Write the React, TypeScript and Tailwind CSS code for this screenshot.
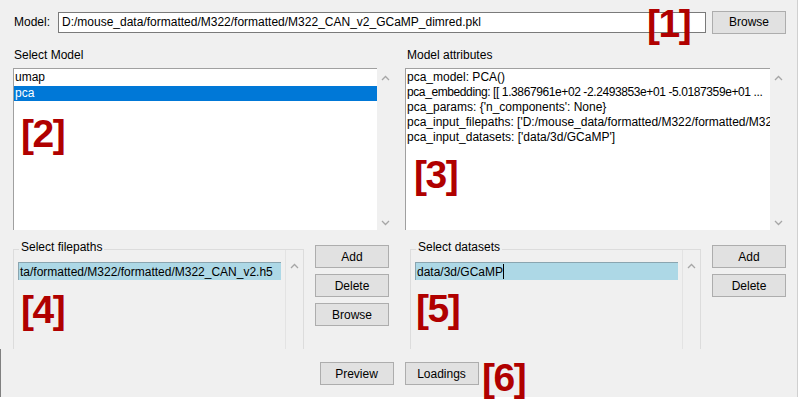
import type { ReactNode } from "react";

const FONT = "font-['Liberation_Sans',Arial,sans-serif] text-[12px] text-black";

function UpArrow() {
  return (
    <svg width="9" height="6" viewBox="0 0 9 6" className="block">
      <polyline points="1,5 4.5,1.5 8,5" fill="none" stroke="#a6a6a6" strokeWidth="1.3" />
    </svg>
  );
}

function DownArrow() {
  return (
    <svg width="9" height="6" viewBox="0 0 9 6" className="block">
      <polyline points="1,1 4.5,4.5 8,1" fill="none" stroke="#a6a6a6" strokeWidth="1.3" />
    </svg>
  );
}

function Btn({ children, className = "" }: { children: ReactNode; className?: string }) {
  return (
    <div
      className={
        "flex items-center justify-center w-[74px] h-[23px] bg-[#e1e1e1] border border-[#adadad] " +
        className
      }
    >
      {children}
    </div>
  );
}

// red callout numbers laid over the dialog
function Tag({ n, className }: { n: number; className: string }) {
  return (
    <div
      className={
        "absolute font-['Liberation_Sans',Arial,sans-serif] font-bold text-[39px] tracking-[-1.5px] leading-none text-[#b00000] " +
        className
      }
    >
      [{n}]
    </div>
  );
}

function Scrollbar() {
  return (
    <div className="w-[17px] flex flex-col items-center justify-between pt-[7px] pb-[4px]">
      <UpArrow />
      <DownArrow />
    </div>
  );
}

function GroupList({
  title,
  item,
  caret,
}: {
  title: string;
  item: string;
  caret?: boolean;
}) {
  return (
    <div className="relative w-[291px] h-[100px] mt-[4px] border-t border-x border-[#dcdcdc] flex">
      <span className="absolute -top-[10px] left-[5px] px-[2px] bg-[#f0f0f0] leading-[15px]">
        {title}
      </span>
      <div className="flex-1 pt-[12px] pl-[4px] pr-[4px] overflow-hidden">
        <div className="h-[18px] bg-[#add8e6] border-t border-l border-[#8aa5b0] pl-[1px] leading-[16px] whitespace-nowrap overflow-hidden flex items-center">
          {item}
          {caret && <span className="inline-block w-[1px] h-[15px] bg-black" />}
        </div>
      </div>
      <div className="w-[18px] border-l border-[#e3e3e3] flex flex-col items-center pt-[13px]">
        <UpArrow />
      </div>
    </div>
  );
}

export default function App() {
  const attrs = [
    { t: "pca_model: PCA()", c: "" },
    { t: "pca_embedding: [[ 1.3867961e+02 -2.2493853e+01 -5.0187359e+01 ...", c: "tracking-[-0.4px]" },
    { t: "pca_params: {'n_components': None}", c: "" },
    { t: "pca_input_filepaths: ['D:/mouse_data/formatted/M322/formatted/M322_CAN_v2.h5']", c: "" },
    { t: "pca_input_datasets: ['data/3d/GCaMP']", c: "" },
  ];

  return (
    <div className={"relative w-[799px] h-[401px] bg-white overflow-hidden " + FONT}>
      <div className="w-[798px] h-[397px] bg-[#f0f0f0] border-r border-[#d0d0d0] flex flex-col">
        {/* model path row */}
        <div className="flex items-center h-[22px] mt-[11px] pl-[14px]">
          <span className="w-[44px]">Model:</span>
          <div className="w-[648px] h-[21px] bg-white border border-[#7a7a7a] pl-[3px] leading-[19px] whitespace-nowrap overflow-hidden">
            D:/mouse_data/formatted/M322/formatted/M322_CAN_v2_GCaMP_dimred.pkl
          </div>
          <Btn className="ml-[6px]">Browse</Btn>
        </div>

        {/* model lists */}
        <div className="flex mt-[15px] pl-[13px]">
          <div className="w-[381px]">
            <div className="pl-[1px] leading-[15px]">Select Model</div>
            <div className="flex h-[162px] mt-[5px]">
              <div className="w-[365px] bg-white border-t border-l border-[#a0a0a0] pt-[1px] leading-[15px]">
                <div className="pl-[1px] h-[16px]">umap</div>
                <div className="pl-[1px] h-[15px] bg-[#0078d7] text-white">pca</div>
              </div>
              <Scrollbar />
            </div>
          </div>
          <div className="w-[382px] ml-[11px]">
            <div className="pl-[2px] leading-[15px]">Model attributes</div>
            <div className="flex h-[162px] mt-[5px]">
              <div className="w-[365px] bg-white border-t border-l border-[#a0a0a0] pt-[1px] pl-[1px] leading-[15px] overflow-hidden">
                {attrs.map((a) => (
                  <div key={a.t} className={"whitespace-nowrap " + a.c}>
                    {a.t}
                  </div>
                ))}
              </div>
              <Scrollbar />
            </div>
          </div>
        </div>

        {/* filepaths / datasets */}
        <div className="flex mt-[11px] pl-[13px] h-[108px]">
          <div className="pt-[4px]">
            <GroupList title="Select filepaths" item="ta/formatted/M322/formatted/M322_CAN_v2.h5" />
          </div>
          <div className="flex flex-col gap-[6px] ml-[11px] pt-[4px]">
            <Btn>Add</Btn>
            <Btn>Delete</Btn>
            <Btn>Browse</Btn>
          </div>
          <div className="pt-[4px] ml-[21px]">
            <GroupList title="Select datasets" item="data/3d/GCaMP" caret />
          </div>
          <div className="flex flex-col gap-[6px] ml-[11px] pt-[4px]">
            <Btn>Add</Btn>
            <Btn>Delete</Btn>
          </div>
        </div>

        {/* footer */}
        <div className="flex-1 flex justify-center gap-[11px] pt-[13px] border-l border-[#808080]">
          <Btn>Preview</Btn>
          <Btn>Loadings</Btn>
        </div>
      </div>

      <Tag n={1} className="left-[647px] top-[4px]" />
      <Tag n={2} className="left-[21px] top-[114px]" />
      <Tag n={3} className="left-[414px] top-[155px]" />
      <Tag n={4} className="left-[21px] top-[290px]" />
      <Tag n={5} className="left-[416px] top-[289px]" />
      <Tag n={6} className="left-[482px] top-[358px]" />
    </div>
  );
}
